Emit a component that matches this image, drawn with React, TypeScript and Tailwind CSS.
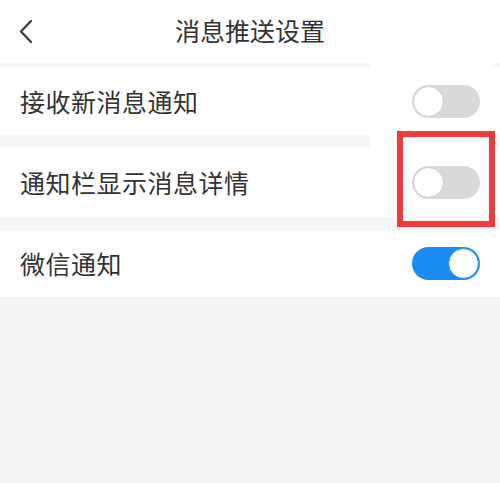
import { useState } from "react";

interface Item { id:string; label:string; on:boolean; h:string; sep:string; patch:boolean; }

const ITEMS: Item[] = [
  { id:"new",    label:"接收新消息通知",     on:false, h:"h-[68px]", sep:"h-[4px]",  patch:true  },
  { id:"detail", label:"通知栏显示消息详情", on:false, h:"h-[70px]", sep:"h-[12px]", patch:true  },
  { id:"wechat", label:"微信通知",           on:true,  h:"h-[67px]", sep:"h-[13px]", patch:false },
];

function Toggle({ on, onClick }: { on:boolean; onClick:()=>void }) {
  return (
    <button onClick={onClick} aria-pressed={on}
      className={`flex items-center p-[1px] w-[68px] h-[33px] rounded-full transition-colors ${on?"bg-[#1a8cf2] justify-end":"bg-[#d9d9d9] justify-start"}`}>
      <span className={`block w-[31px] h-[31px] rounded-full bg-white border-[1.5px] ${on?"border-[#1a8cf2]":"border-[#cfcfcf]"}`} />
    </button>
  );
}

export default function App() {
  const [state, setState] = useState(ITEMS.map(i=>i.on));
  return (
    <div className="relative w-[500px] h-[483px] overflow-hidden bg-[#f4f5f7] text-[#333]" style={{fontFamily:'"Noto Sans CJK SC", "Noto Sans", sans-serif'}}>
      <header className="h-[63px] bg-white grid grid-cols-[1fr_auto_1fr] items-center pl-[18px]">
        <svg width="16" height="25" viewBox="0 0 16 25" fill="none" stroke="#3a3a3a" strokeWidth="2.2" strokeLinecap="round" strokeLinejoin="round" className="-mt-[1px]">
          <path d="M13 2 L3 12.5 L13 23" />
        </svg>
        <h1 className="text-[25px] leading-none text-[#333] -ml-[18px] -mt-[2px]">消息推送设置</h1>
        <span />
      </header>
      {ITEMS.map((it,i)=>(
        <div key={it.id}>
          <div className={`${it.sep} bg-[#f5f6f8] flex`}>
            {it.patch && <div className="ml-[370px] w-[122px] bg-white" />}
          </div>
          <div className={`${it.h} bg-white flex items-center justify-between pl-[20px] pr-[20px]`}>
            <span className="text-[25px] leading-none tracking-[0.5px]">{it.label}</span>
            <Toggle on={state[i]} onClick={()=>setState(s=>s.map((v,j)=>j===i?!v:v))} />
          </div>
        </div>
      ))}
      <div className="absolute left-[397px] top-[131px] w-[98px] h-[96px] border-[6px] border-[#f23a3a] pointer-events-none" />
    </div>
  );
}
